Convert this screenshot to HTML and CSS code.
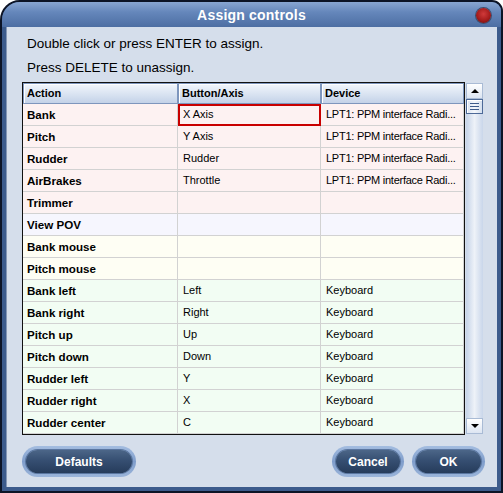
FILE: index.html
```html
<!DOCTYPE html>
<html>
<head>
<meta charset="utf-8">
<link rel="stylesheet" href="styles.css">
</head>
<body>
<div class="window">
  <div class="titlebar">
    <span></span>
    <span class="title">Assign controls</span>
    <span class="close"></span>
  </div>
  <div class="body">
    <div class="hint">Double click or press ENTER to assign.</div>
    <div class="hint">Press DELETE to unassign.</div>
    <div class="tablewrap">
      <div class="table">
        <div class="th">Action</div><div class="th">Button/Axis</div><div class="th">Device</div>

        <div class="td act pink">Bank</div><div class="td pink sel">X Axis</div><div class="td dev pink">LPT1: PPM interface Radi...</div>
        <div class="td act pink">Pitch</div><div class="td pink">Y Axis</div><div class="td dev pink">LPT1: PPM interface Radi...</div>
        <div class="td act pink">Rudder</div><div class="td pink">Rudder</div><div class="td dev pink">LPT1: PPM interface Radi...</div>
        <div class="td act pink">AirBrakes</div><div class="td pink">Throttle</div><div class="td dev pink">LPT1: PPM interface Radi...</div>
        <div class="td act pink">Trimmer</div><div class="td pink"></div><div class="td pink"></div>
        <div class="td act lav">View POV</div><div class="td lav"></div><div class="td lav"></div>
        <div class="td act yel">Bank mouse</div><div class="td yel"></div><div class="td yel"></div>
        <div class="td act yel">Pitch mouse</div><div class="td yel"></div><div class="td yel"></div>
        <div class="td act grn">Bank left</div><div class="td grn">Left</div><div class="td grn">Keyboard</div>
        <div class="td act grn">Bank right</div><div class="td grn">Right</div><div class="td grn">Keyboard</div>
        <div class="td act grn">Pitch up</div><div class="td grn">Up</div><div class="td grn">Keyboard</div>
        <div class="td act grn">Pitch down</div><div class="td grn">Down</div><div class="td grn">Keyboard</div>
        <div class="td act grn">Rudder left</div><div class="td grn">Y</div><div class="td grn">Keyboard</div>
        <div class="td act grn">Rudder right</div><div class="td grn">X</div><div class="td grn">Keyboard</div>
        <div class="td act grn">Rudder center</div><div class="td grn">C</div><div class="td grn">Keyboard</div>
      </div>
      <div class="scrollbar">
        <div class="sbtn"><span class="arrow up"></span></div>
        <div class="thumb"><span></span><span></span><span></span></div>
        <div class="track"></div>
        <div class="sbtn"><span class="arrow down"></span></div>
      </div>
    </div>
    <div class="buttons">
      <div class="btn defaults"><span>Defaults</span></div>
      <div class="spacer"></div>
      <div class="btn cancel"><span>Cancel</span></div>
      <div class="btn ok"><span>OK</span></div>
    </div>
  </div>
</div>
</body>
</html>
```
FILE: styles.css
```css
html, body {
  margin: 0;
  padding: 0;
  background: #ffffff;
}
.window {
  width: 503px;
  height: 493px;
  box-sizing: border-box;
  border: 2px solid #0c1426;
  border-radius: 20px 11px 0 0;
  background: #3c5b8c;
  display: flex;
  flex-direction: column;
  overflow: hidden;
  font-family: "Liberation Sans", Arial, sans-serif;
}
.titlebar {
  height: 25px;
  flex: none;
  display: grid;
  grid-template-columns: 1fr auto 1fr;
  align-items: center;
  background: linear-gradient(#88a6d2 0%, #6587bb 40%, #4d6ea3 100%);
}
.title {
  color: #ffffff;
  font-weight: bold;
  font-size: 14px;
  letter-spacing: 0.2px;
}
.close {
  justify-self: end;
  width: 15px;
  height: 15px;
  margin-right: 10px;
  margin-top: 1px;
  border-radius: 50%;
  background: radial-gradient(circle at 50% 40%, #d03a3a 0%, #a51c1c 55%, #5e0c0c 100%);
  box-shadow: 0 0 0 1px #3b4f70;
}
.body {
  flex: 1;
  margin: 0 4px 4px 4px;
  background: #d5deeb;
  padding: 5px 12px 0 16px;
  display: flex;
  flex-direction: column;
  box-shadow: inset 1px 0 0 #8597b5;
}
.hint {
  height: 24px;
  line-height: 24px;
  font-size: 13.5px;
  color: #000;
  padding-left: 5px;
}
.tablewrap {
  margin-top: 2px;
  display: flex;
  align-items: stretch;
}
.table {
  width: 443px;
  box-sizing: border-box;
  border: 1px solid #111;
  display: grid;
  grid-template-columns: 155px 143px 143px;
  grid-auto-rows: 22px;
  grid-template-rows: 21px;
}
.th {
  box-sizing: border-box;
  border: 1px solid #7e96bd;
  box-shadow: inset 1px 1px 0 #ffffff;
  background: linear-gradient(#f2f6fc, #d6e1f0 60%, #c3d2e8);
  font-weight: bold;
  font-size: 11px;
  line-height: 19px;
  padding-left: 3px;
  color: #000;
}
.td {
  box-sizing: border-box;
  border-right: 1px solid #d2d2d2;
  border-bottom: 1px solid #d2d2d2;
  font-size: 11px;
  line-height: 21px;
  padding-left: 5px;
  white-space: nowrap;
  overflow: hidden;
  color: #000;
}
.td.dev {
  letter-spacing: -0.25px;
}
.td.act {
  font-weight: bold;
  font-size: 11.6px;
  padding-left: 4px;
}
.pink { background: #fdf2f2; }
.lav { background: #f6f6fe; }
.yel { background: #fefef4; }
.grn { background: #f2fdf3; }
.td.sel {
  outline: 2px solid #c80000;
  outline-offset: -2px;
  padding-left: 5px;
}
.scrollbar {
  width: 17px;
  margin: 1px 0 1px 1px;
  display: flex;
  flex-direction: column;
  background: linear-gradient(90deg, #c5d3e8, #eef2f8 50%, #c9d6ea);
}
.sbtn {
  height: 16px;
  flex: none;
  box-sizing: border-box;
  border: 1px solid #a9bbd5;
  background: linear-gradient(#ffffff, #dce5f2);
  display: flex;
  align-items: center;
  justify-content: center;
}
.arrow {
  width: 0;
  height: 0;
  border-left: 4px solid transparent;
  border-right: 4px solid transparent;
}
.arrow.up { border-bottom: 4px solid #000; }
.arrow.down { border-top: 4px solid #000; }
.thumb {
  height: 15px;
  flex: none;
  box-sizing: border-box;
  border: 1px solid #4d6a98;
  box-shadow: inset 1px 1px 0 #ffffff;
  background: linear-gradient(90deg, #dbe4f2, #f4f7fb 50%, #d5e0ef);
  display: flex;
  flex-direction: column;
  align-items: center;
  justify-content: center;
  gap: 2px;
}
.thumb span {
  width: 9px;
  height: 1px;
  background: #3e5c8c;
}
.track {
  flex: 1;
}
.buttons {
  margin-top: 11px;
  display: flex;
  gap: 8px;
}
.spacer { flex: 1; }
.btn {
  height: 31px;
  box-sizing: border-box;
  padding: 4px;
  border-radius: 16px;
  background: linear-gradient(#a4bde0, #7f9dcb 50%, #9ab4da);
  display: flex;
}
.btn span {
  flex: 1;
  border-radius: 12px;
  background: linear-gradient(#4c6688 0%, #364f72 45%, #263c5b 100%);
  box-shadow: 0 0 0 1px #5a76a0;
  color: #ffffff;
  font-weight: bold;
  font-size: 12px;
  display: flex;
  align-items: center;
  justify-content: center;
}
.defaults { width: 114px; }
.cancel { width: 72px; }
.ok { width: 73px; }
```
